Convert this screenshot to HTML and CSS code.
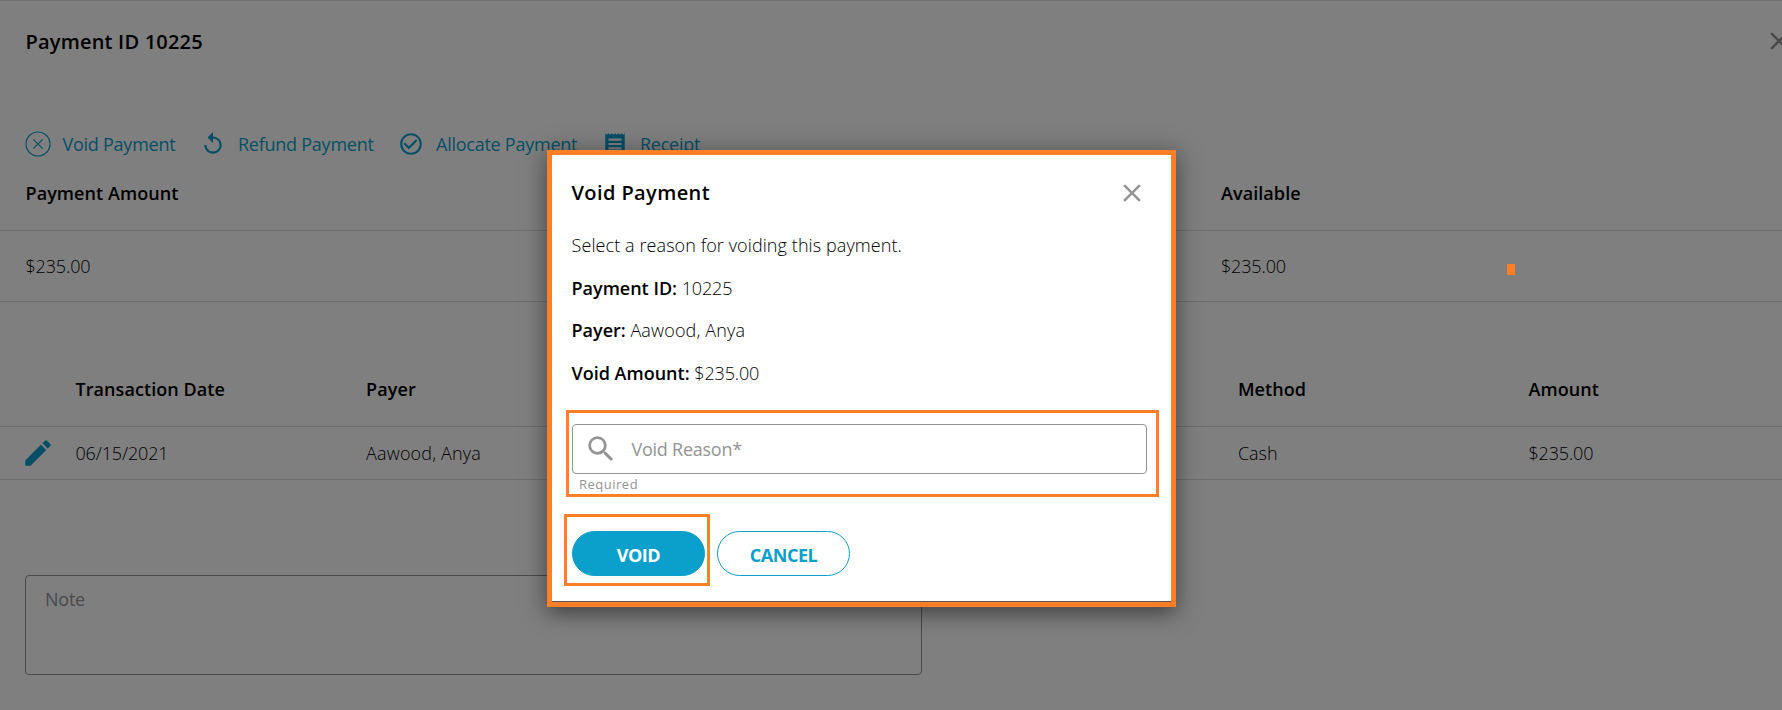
FILE: index.html
```html
<!DOCTYPE html>
<html lang="en">
<head>
<meta charset="utf-8">
<title>Payment ID 10225</title>
<link rel="stylesheet" href="styles.css">
</head>
<body>
<main class="page">
  <header class="page-header">
    <h1 class="title">Payment ID 10225</h1>
    <svg class="close page-close" viewBox="0 0 24 24"><path d="M19 6.41L17.59 5 12 10.59 6.41 5 5 6.41 10.59 12 5 17.59 6.41 19 12 13.41 17.59 19 19 17.59 13.41 12z"/></svg>
  </header>
  <nav class="actions">
    <a class="action action-void"><svg class="icon-void" viewBox="0 0 26 26"><circle cx="13" cy="13" r="12"/><path d="M8.3 8.3l9.4 9.4M17.7 8.3l-9.4 9.4"/></svg><span>Void Payment</span></a>
    <a class="action action-refund"><svg class="icon" viewBox="0 0 24 24"><path d="M12 5V1L7 6l5 5V7c3.31 0 6 2.69 6 6s-2.69 6-6 6-6-2.69-6-6H4c0 4.42 3.58 8 8 8s8-3.58 8-8-3.58-8-8-8z"/></svg><span>Refund Payment</span></a>
    <a class="action action-allocate"><svg class="icon" viewBox="0 0 24 24"><path d="M16.59 7.58L10 14.17l-3.59-3.58L5 12l5 5 8-8zM12 2C6.48 2 2 6.48 2 12s4.48 10 10 10 10-4.48 10-10S17.52 2 12 2zm0 18c-4.42 0-8-3.58-8-8s3.58-8 8-8 8 3.58 8 8-3.58 8-8 8z"/></svg><span>Allocate Payment</span></a>
    <a class="action action-receipt"><svg class="icon" viewBox="0 0 24 24"><path d="M18 17H6v-2h12v2zm0-4H6v-2h12v2zm0-4H6V7h12v2zM3 22l1.5-1.5L6 22l1.5-1.5L9 22l1.5-1.5L12 22l1.5-1.5L15 22l1.5-1.5L18 22l1.5-1.5L21 22V2l-1.5 1.5L18 2l-1.5 1.5L15 2l-1.5 1.5L12 2l-1.5 1.5L9 2 7.5 3.5 6 2 4.5 3.5 3 2v20z"/></svg><span>Receipt</span></a>
  </nav>
  <section class="summary">
    <div class="row head"><span>Payment Amount</span><span>Available</span></div>
    <div class="row"><span class="num">$235.00</span><span class="num">$235.00</span></div>
  </section>
  <section class="transactions">
    <div class="row head"><span></span><span>Transaction Date</span><span>Payer</span><span></span><span></span><span>Method</span><span>Amount</span></div>
    <div class="row"><svg class="edit" viewBox="0 0 24 24"><path d="M3 17.25V21h3.75L17.81 9.94l-3.75-3.75L3 17.25zM20.71 7.04a1 1 0 0 0 0-1.41l-2.34-2.34a1 1 0 0 0-1.41 0l-1.83 1.83 3.75 3.75 1.83-1.83z"/></svg><span class="num">06/15/2021</span><span class="name">Aawood, Anya</span><span></span><span></span><span>Cash</span><span class="num">$235.00</span></div>
  </section>
  <div class="note">Note</div>
</main>
<div class="backdrop"></div>
<div class="marker"></div>
<div class="dialog" role="dialog">
  <div class="dialog-body">
    <div class="dialog-header">
      <h2 class="title dialog-title">Void Payment</h2>
      <svg class="close" viewBox="0 0 24 24"><path d="M19 6.41L17.59 5 12 10.59 6.41 5 5 6.41 10.59 12 5 17.59 6.41 19 12 13.41 17.59 19 19 17.59 13.41 12z"/></svg>
    </div>
    <div class="details">
      <p class="lead">Select a reason for voiding this payment.</p>
      <p><b>Payment ID:</b> <span class="num">10225</span></p>
      <p><b>Payer:</b> <span class="name">Aawood, Anya</span></p>
      <p><b>Void Amount:</b> <span class="num">$235.00</span></p>
    </div>
    <div class="callout callout-field">
      <div class="field"><svg class="search" viewBox="0 0 24 24"><path d="M15.5 14h-.79l-.28-.27A6.47 6.47 0 0 0 16 9.5 6.5 6.5 0 1 0 9.5 16c1.61 0 3.09-.59 4.23-1.57l.27.28v.79l5 4.99L20.49 19l-4.99-5zm-6 0C7.01 14 5 11.99 5 9.5S7.01 5 9.5 5 14 7.01 14 9.5 11.99 14 9.5 14z"/></svg><span>Void Reason*</span></div>
      <div class="hint">Required</div>
    </div>
    <div class="buttons">
      <div class="callout callout-button"><button class="btn btn-primary">VOID</button></div>
      <button class="btn btn-cancel">CANCEL</button>
    </div>
  </div>
</div>
</body>
</html>
```
FILE: styles.css
```css
* { box-sizing: border-box; }
body {
  margin: 0;
  width: 1782px;
  height: 710px;
  overflow: hidden;
  background: #fff;
  color: #000;
  font: 300 18px/24px "Open Sans", sans-serif;
}
h1, h2, p { margin: 0; }
svg { display: block; flex: none; }

.page { height: 710px; border-top: 1px solid #dedede; overflow: hidden; }
.title { font-size: 20px; line-height: 28px; font-weight: 600; letter-spacing: .2px; padding-top: 1px; }
.dialog-title { letter-spacing: .4px; padding: 0; }
.close { width: 30px; height: 30px; fill: #949494; }
.page-header { display: flex; justify-content: space-between; align-items: center; width: 1794px; height: 80px; padding-left: 25.5px; }

.actions { display: flex; align-items: center; height: 50px; margin-top: 25px; padding: 25px 0 0 24.5px; color: #0b9fcc; }
.action { display: flex; align-items: center; gap: 12px; white-space: nowrap; font-weight: 400; letter-spacing: -.25px; }
.icon { width: 26px; height: 26px; fill: #0b9fcc; }
.icon-void { width: 26px; height: 26px; fill: none; stroke: #0b9fcc; stroke-width: 1.2; }
.action-void { width: 175.5px; }
.action-refund { width: 198px; }
.action-allocate { width: 204px; }

.row { display: grid; align-items: center; border-bottom: 1px solid #dcdcdc; }
.head { height: 75px; font-weight: 600; letter-spacing: .07px; }
.num { letter-spacing: -.15px; }
.name { letter-spacing: .15px; }
.lead { letter-spacing: .09px; }
.summary .row { grid-template-columns: 1195.5px 1fr; padding-left: 25.5px; }
.summary .row:last-child { height: 71px; }
.transactions { margin-top: 50px; }
.transactions .row { grid-template-columns: 55px repeat(5, 290.6px) 1fr; padding-left: 20.5px; }
.transactions .row:last-child { height: 53px; }
.edit { width: 34px; height: 34px; fill: #0b9fcc; }
.note { width: 897px; height: 100px; margin: 95px 0 0 25px; padding: 11px 19px; border: 1px solid #949494; border-radius: 4px; color: #949494; font-weight: 400; letter-spacing: -.25px; }

.backdrop { position: absolute; inset: 0; background: rgba(0, 0, 0, .5); }
.marker { position: absolute; left: 1507px; top: 264px; width: 8px; height: 11px; background: #ff7f27; }

.dialog { position: absolute; left: 547px; top: 150px; width: 629px; height: 457px; border: 5px solid #ff7f27; background: #555; box-shadow: 0 11px 15px -7px rgba(0,0,0,.2), 0 4px 22px 3px rgba(0,0,0,.35); }
.dialog-body { height: 446px; background: #fff; padding: 23px 12px 0; }
.dialog-header { display: flex; align-items: center; justify-content: space-between; height: 30px; padding: 0 12px 0 7.5px; }
.details { padding: 25px 7.5px 0; display: grid; gap: 18.5px; }
b { font-weight: 600; }
.callout { border: 3px solid #ff7f27; }
.callout-field { width: 593px; height: 87px; margin: 25.5px 0 0 2px; padding: 11px 9px 0 3px; }
.field { display: flex; align-items: center; gap: 13.5px; height: 50px; padding-left: 11px; border: 1px solid #949494; border-radius: 4px; color: #949494; font-weight: 400; letter-spacing: -.25px; }
.search { width: 34px; height: 34px; fill: #949494; }
.hint { padding: 1px 0 0 7px; font-size: 13px; line-height: 18px; letter-spacing: .5px; color: #949494; font-weight: 400; }
.buttons { display: flex; gap: 7px; align-items: flex-start; margin-top: 17px; }
.callout-button { width: 146px; height: 72px; padding: 14px 2px 0 5px; }
.btn { display: block; width: 133px; height: 45px; border: 1px solid #0b9fcc; border-radius: 23px; background: #fff; color: #0b9fcc; font: 700 18px/24px "Open Sans", sans-serif; letter-spacing: -.45px; padding: 2px 0 0; }
.btn-cancel { margin-top: 17px; }
.btn-primary { background: #0b9fcc; color: #fff; }
```
